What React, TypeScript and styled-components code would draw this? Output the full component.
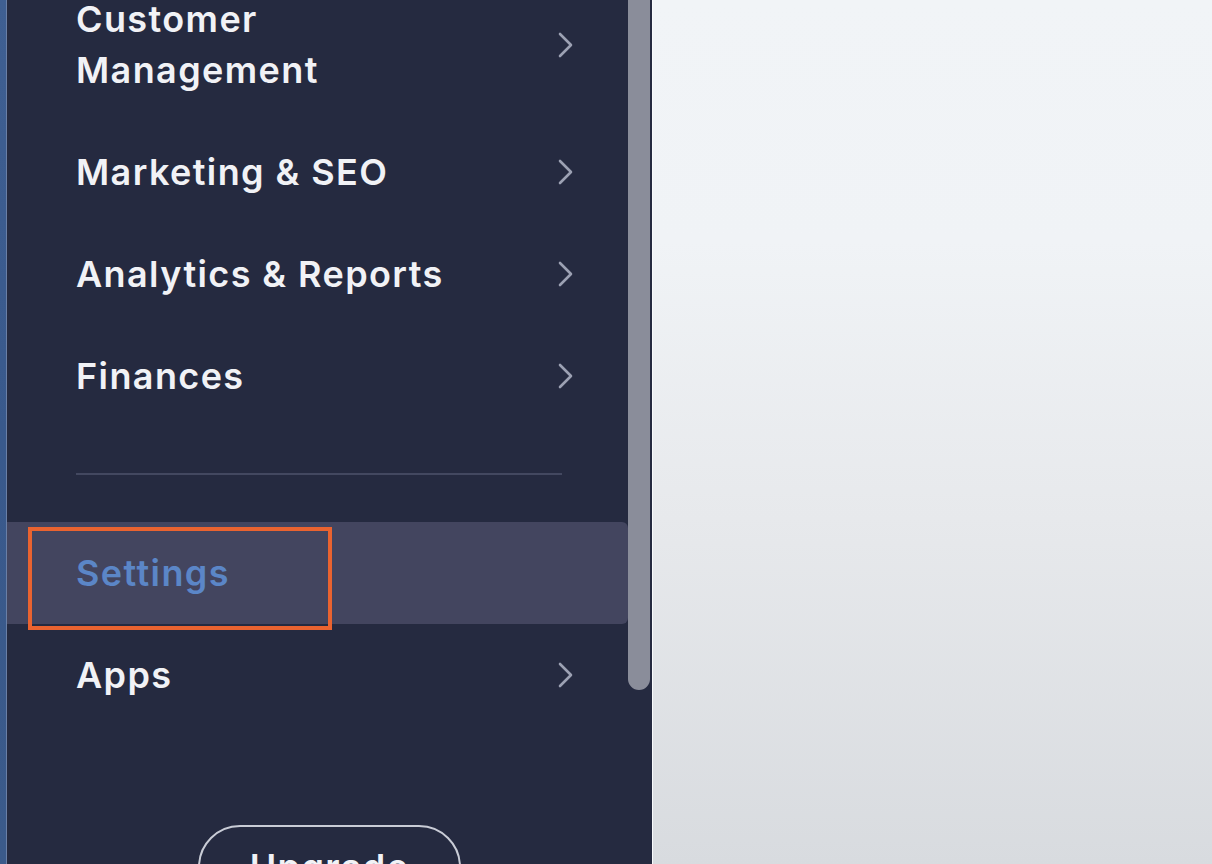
import React from "react";
import styled, { createGlobalStyle } from "styled-components";

const Global = createGlobalStyle`
  html, body { margin: 0; padding: 0; background: #252a40; }
  body { font-family: "Inter", "Open Sans", sans-serif; }
  * { box-sizing: border-box; }
`;

const Page = styled.div`
  display: flex;
  width: 1212px;
  height: 864px;
  overflow: hidden;
`;

const EdgeStrip = styled.div`
  flex: 0 0 7px;
  background: linear-gradient(180deg, #3f5f92 0%, #39598c 50%, #3b5a8a 100%);
  border-right: 1px solid #6a7fa6;
`;

const Sidebar = styled.aside`
  flex: 0 0 645px;
  display: flex;
  background: #252a40;
`;

const Menu = styled.nav`
  flex: 1;
  display: flex;
  flex-direction: column;
  margin-top: -32px;
  & > * { flex-shrink: 0; }
`;

const Item = styled.div<{ $active?: boolean }>`
  position: relative;
  display: flex;
  align-items: center;
  justify-content: space-between;
  padding: 25.5px 55px 25.5px 69px;
  background: ${(p) => (p.$active ? "#43455f" : "transparent")};
  border-radius: 0 6px 6px 0;
`;

const Label = styled.span<{ $active?: boolean }>`
  font-family: "Inter", "Open Sans", sans-serif;
  font-size: 36px;
  font-weight: 600;
  line-height: 51px;
  letter-spacing: 1.4px;
  color: ${(p) => (p.$active ? "#5b86c7" : "#f1f2f6")};
`;

const Divider = styled.div`
  margin: 46px 66px 47px 69px;
  height: 2px;
  background: #434860;
`;

const Annotation = styled.div`
  position: absolute;
  left: 21px;
  top: 5px;
  width: 304px;
  height: 103px;
  border: 4px solid #ea6330;
`;

const UpgradeRow = styled.div`
  display: flex;
  padding: 99px 0 0 191px;
`;

const UpgradeButton = styled.button`
  width: 263px;
  height: 84px;
  border: 2px solid #c9ccd6;
  border-radius: 42px;
  background: transparent;
  color: #f1f2f6;
  font-family: "Inter", "Open Sans", sans-serif;
  font-size: 36px;
  font-weight: 600;
  letter-spacing: 1.4px;
  padding: 0;
  line-height: 80px;
`;

const ScrollTrack = styled.div`
  flex: 0 0 24px;
  display: flex;
  padding-right: 2px;
`;

const Thumb = styled.div`
  width: 22px;
  height: 690px;
  background: #8a8d9a;
  border-radius: 0 0 11px 11px;
`;

const Main = styled.main`
  flex: 1;
  border-left: 1px solid #f8fafc;
  background: linear-gradient(180deg, #f1f4f7 0%, #f0f3f6 28%, #e7e9ec 60%, #d8dbdf 100%);
`;

const Chevron = () => (
  <svg width="16" height="28" viewBox="0 0 16 28" fill="none">
    <polyline
      points="3,3 14,14 3,25"
      stroke="#9ca1b3"
      strokeWidth="2.6"
      strokeLinecap="round"
      strokeLinejoin="round"
    />
  </svg>
);

export default function App() {
  return (
    <Page>
      <Global />
      <EdgeStrip />
      <Sidebar>
        <Menu>
          <Item>
            <Label>
              Customer
              <br />
              Management
            </Label>
            <Chevron />
          </Item>
          <Item>
            <Label>Marketing &amp; SEO</Label>
            <Chevron />
          </Item>
          <Item>
            <Label>Analytics &amp; Reports</Label>
            <Chevron />
          </Item>
          <Item>
            <Label>Finances</Label>
            <Chevron />
          </Item>
          <Divider />
          <Item $active>
            <Label $active>Settings</Label>
            <Annotation />
          </Item>
          <Item>
            <Label>Apps</Label>
            <Chevron />
          </Item>
          <UpgradeRow>
            <UpgradeButton>Upgrade</UpgradeButton>
          </UpgradeRow>
        </Menu>
        <ScrollTrack>
          <Thumb />
        </ScrollTrack>
      </Sidebar>
      <Main />
    </Page>
  );
}
